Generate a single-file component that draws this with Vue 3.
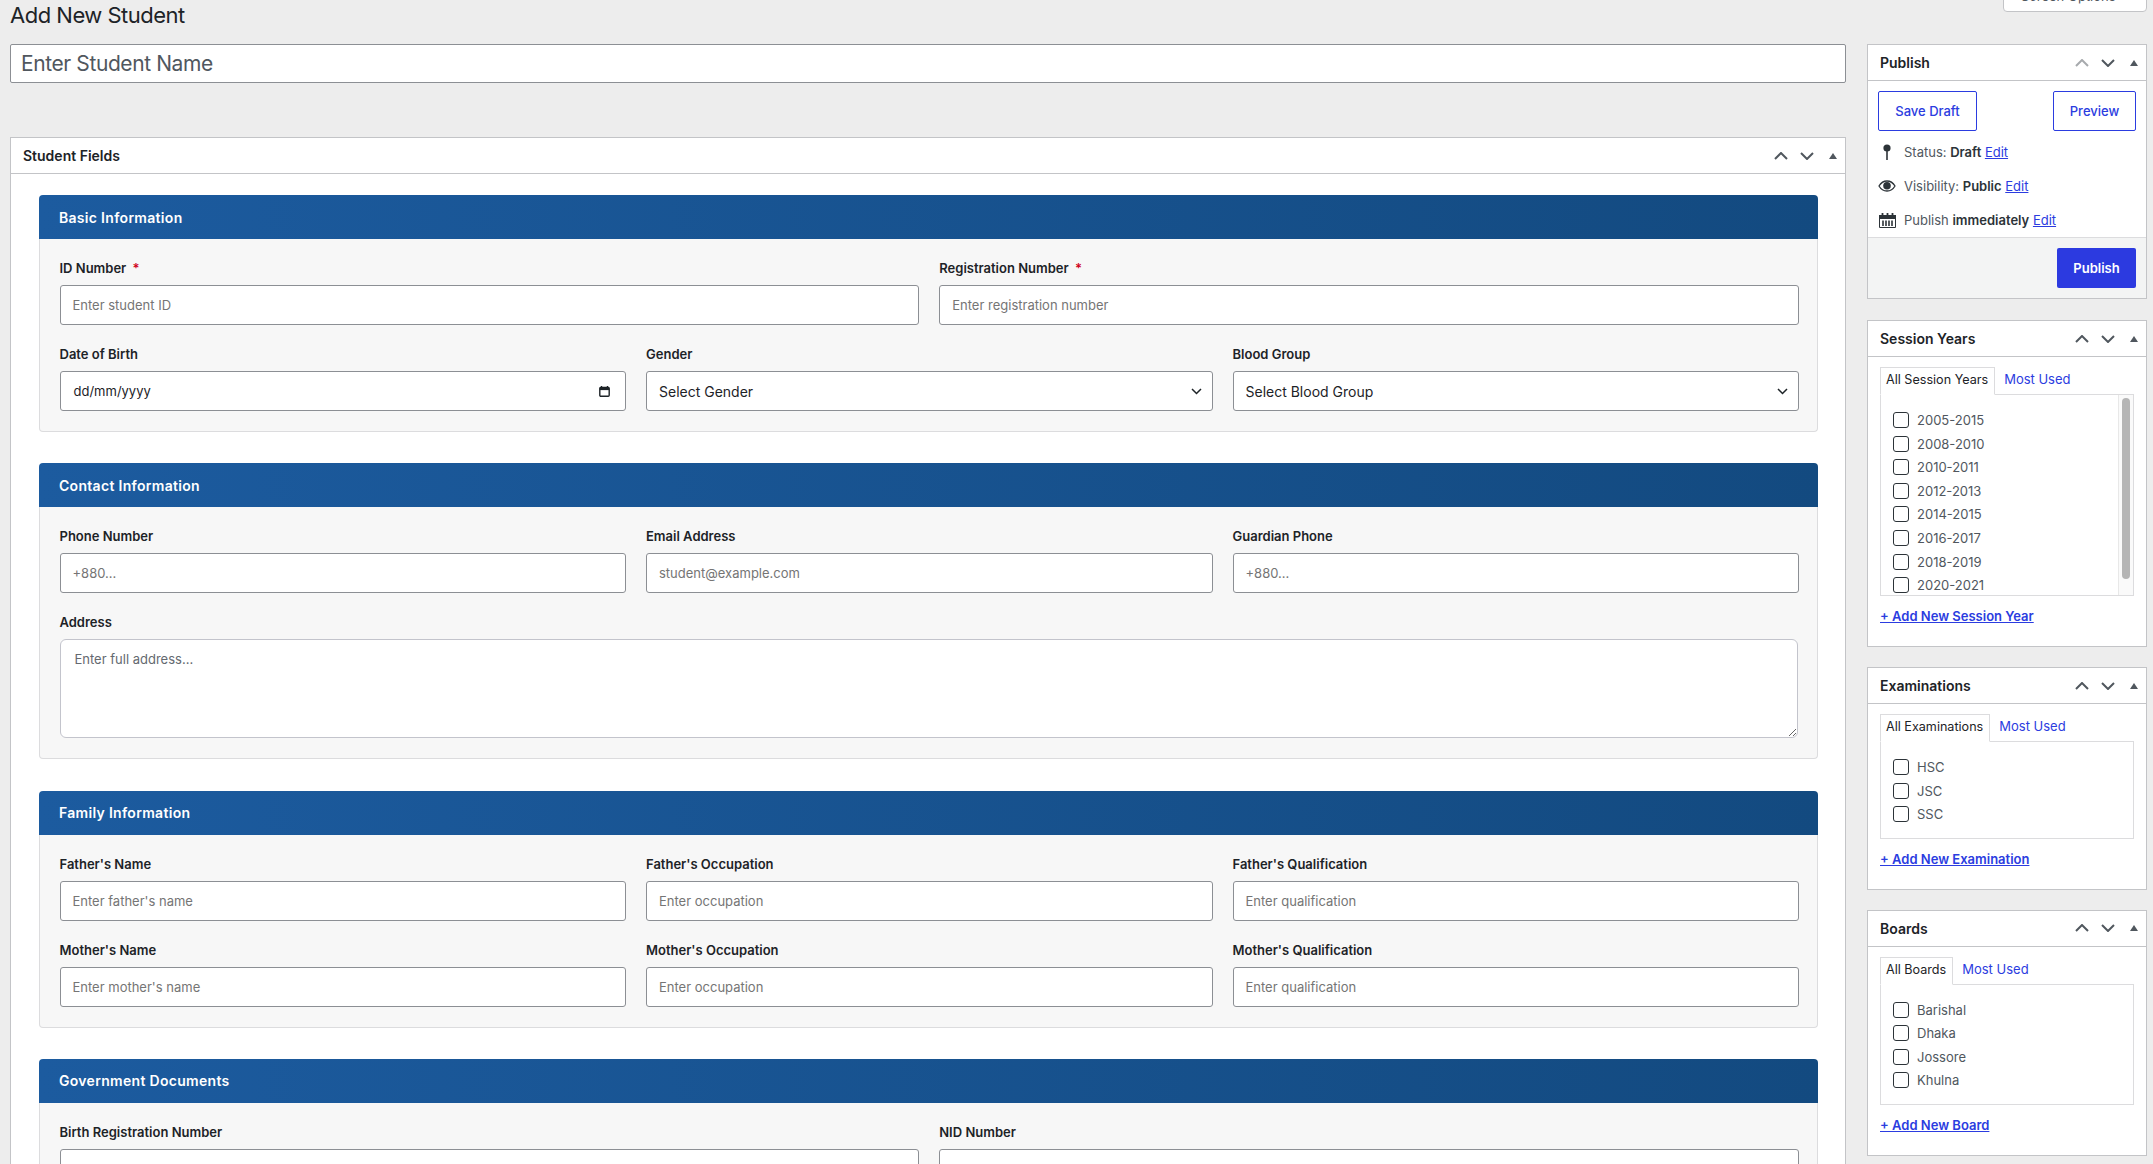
<script setup>
const basicRow = [
  { label: 'Date of Birth', type: 'date' },
  { label: 'Gender', type: 'select', value: 'Select Gender' },
  { label: 'Blood Group', type: 'select', value: 'Select Blood Group' }
]

const contactRow = [
  { label: 'Phone Number', placeholder: '+880...' },
  { label: 'Email Address', placeholder: 'student@example.com' },
  { label: 'Guardian Phone', placeholder: '+880...' }
]

const familyRows = [
  [
    { label: "Father's Name", placeholder: "Enter father's name" },
    { label: "Father's Occupation", placeholder: 'Enter occupation' },
    { label: "Father's Qualification", placeholder: 'Enter qualification' }
  ],
  [
    { label: "Mother's Name", placeholder: "Enter mother's name" },
    { label: "Mother's Occupation", placeholder: 'Enter occupation' },
    { label: "Mother's Qualification", placeholder: 'Enter qualification' }
  ]
]

const taxonomies = [
  {
    title: 'Session Years',
    tab: 'All Session Years',
    add: '+ Add New Session Year',
    scroll: true,
    items: ['2005-2015', '2008-2010', '2010-2011', '2012-2013', '2014-2015', '2016-2017', '2018-2019', '2020-2021']
  },
  {
    title: 'Examinations',
    tab: 'All Examinations',
    add: '+ Add New Examination',
    items: ['HSC', 'JSC', 'SSC']
  },
  {
    title: 'Boards',
    tab: 'All Boards',
    add: '+ Add New Board',
    items: ['Barishal', 'Dhaka', 'Jossore', 'Khulna']
  }
]
</script>

<template>
  <div class="page">
    <div class="page-top">
      <h1>Add New Student</h1>
      <div class="screen-options">Screen Options <span class="caret"></span></div>
    </div>

    <div class="columns">
      <main class="main-col">
        <input class="title-input" type="text" placeholder="Enter Student Name">

        <div class="postbox fields-box">
          <div class="postbox-head">
            <h2>Student Fields</h2>
            <div class="handles">
              <svg class="chev" viewBox="0 0 14 8"><path d="M1 7l6-6 6 6" /></svg>
              <svg class="chev" viewBox="0 0 14 8"><path d="M1 1l6 6 6-6" /></svg>
              <svg class="tri" viewBox="0 0 8 6"><path d="M4 0l4 6H0z" /></svg>
            </div>
          </div>

          <div class="fields-inner">
            <section class="section">
              <h3 class="section-head">Basic Information</h3>
              <div class="section-body">
                <div class="row two">
                  <div class="field">
                    <label>ID Number <span class="req">*</span></label>
                    <input class="input" type="text" placeholder="Enter student ID">
                  </div>
                  <div class="field">
                    <label>Registration Number <span class="req">*</span></label>
                    <input class="input" type="text" placeholder="Enter registration number">
                  </div>
                </div>
                <div class="row three">
                  <div v-for="f in basicRow" :key="f.label" class="field">
                    <label>{{ f.label }}</label>
                    <div v-if="f.type === 'date'" class="input date-input">
                      <span>dd/mm/yyyy</span>
                      <svg class="cal" viewBox="0 0 11 11">
                        <path d="M2.5 0v2M8.5 0v2" stroke="#1d2327" stroke-width="1.4" />
                        <rect x="0.8" y="1.5" width="9.4" height="8.8" rx="1" fill="none" stroke="#1d2327" stroke-width="1.4" />
                        <rect x="0.8" y="1.5" width="9.4" height="2.6" fill="#1d2327" />
                      </svg>
                    </div>
                    <div v-else class="select-wrap">
                      <select class="input select">
                        <option>{{ f.value }}</option>
                      </select>
                      <svg class="select-arrow" viewBox="0 0 11 7"><path d="M1 1l4.5 4.5L10 1" /></svg>
                    </div>
                  </div>
                </div>
              </div>
            </section>

            <section class="section">
              <h3 class="section-head">Contact Information</h3>
              <div class="section-body">
                <div class="row three">
                  <div v-for="f in contactRow" :key="f.label" class="field">
                    <label>{{ f.label }}</label>
                    <input class="input" type="text" :placeholder="f.placeholder">
                  </div>
                </div>
                <div class="row">
                  <div class="field">
                    <label>Address</label>
                    <textarea class="textarea" placeholder="Enter full address..."></textarea>
                  </div>
                </div>
              </div>
            </section>

            <section class="section">
              <h3 class="section-head">Family Information</h3>
              <div class="section-body">
                <div v-for="(r, i) in familyRows" :key="i" class="row three">
                  <div v-for="f in r" :key="f.label" class="field">
                    <label>{{ f.label }}</label>
                    <input class="input" type="text" :placeholder="f.placeholder">
                  </div>
                </div>
              </div>
            </section>

            <section class="section">
              <h3 class="section-head">Government Documents</h3>
              <div class="section-body">
                <div class="row two">
                  <div class="field">
                    <label>Birth Registration Number</label>
                    <input class="input" type="text">
                  </div>
                  <div class="field">
                    <label>NID Number</label>
                    <input class="input" type="text">
                  </div>
                </div>
              </div>
            </section>
          </div>
        </div>
      </main>

      <aside class="side-col">
        <div class="postbox publish-box">
          <div class="postbox-head">
            <h2>Publish</h2>
            <div class="handles">
              <svg class="chev faded" viewBox="0 0 14 8"><path d="M1 7l6-6 6 6" /></svg>
              <svg class="chev" viewBox="0 0 14 8"><path d="M1 1l6 6 6-6" /></svg>
              <svg class="tri" viewBox="0 0 8 6"><path d="M4 0l4 6H0z" /></svg>
            </div>
          </div>
          <div class="publish-actions">
            <button class="btn-outline save">Save Draft</button>
            <button class="btn-outline preview">Preview</button>
          </div>
          <div class="misc">
            <div class="misc-row">
              <span class="misc-icon">
                <svg viewBox="0 0 18 16" width="18" height="16">
                  <circle cx="9" cy="4" r="3.6" fill="#2c3338" />
                  <path d="M9 6v10" stroke="#2c3338" stroke-width="1.6" />
                </svg>
              </span>
              <span>Status: <b>Draft</b> <a>Edit</a></span>
            </div>
            <div class="misc-row">
              <span class="misc-icon">
                <svg viewBox="0 0 18 12" width="18" height="12">
                  <path d="M1 6c2-3.4 4.800-5 8-5s6 1.600 8 5c-2 3.400-4.800 5-8 5s-6-1.600-8-5z" fill="none" stroke="#2c3338" stroke-width="1.300" />
                  <circle cx="9" cy="5.700" r="3.800" fill="#2c3338" />
                </svg>
              </span>
              <span>Visibility: <b>Public</b> <a>Edit</a></span>
            </div>
            <div class="misc-row">
              <span class="misc-icon">
                <svg viewBox="0 0 17 15" width="17" height="15">
                  <path d="M0.500 2.500h16v12h-16z" fill="none" stroke="#2c3338" />
                  <path d="M0 2h17v4H0z" fill="#2c3338" />
                  <path d="M3.500 0v3M8.500 0v3M13.500 0v3" stroke="#2c3338" stroke-width="1.800" />
                  <path d="M4 7.500v5.500M7 7.500v5.500M10 7.500v5.500M13 7.500v5.500" stroke="#2c3338" stroke-width="1.600" />
                </svg>
              </span>
              <span>Publish <b>immediately</b> <a>Edit</a></span>
            </div>
          </div>
          <div class="publish-foot">
            <button class="btn-primary">Publish</button>
          </div>
        </div>

        <div v-for="t in taxonomies" :key="t.title" class="postbox">
          <div class="postbox-head">
            <h2>{{ t.title }}</h2>
            <div class="handles">
              <svg class="chev" viewBox="0 0 14 8"><path d="M1 7l6-6 6 6" /></svg>
              <svg class="chev" viewBox="0 0 14 8"><path d="M1 1l6 6 6-6" /></svg>
              <svg class="tri" viewBox="0 0 8 6"><path d="M4 0l4 6H0z" /></svg>
            </div>
          </div>
          <div class="tax-body">
            <div class="tabs">
              <span class="tab active">{{ t.tab }}</span>
              <a class="tab-link">Most Used</a>
            </div>
            <div class="tax-panel" :class="{ scrolling: t.scroll }">
              <ul>
                <li v-for="item in t.items" :key="item">
                  <input type="checkbox" class="check">
                  <span>{{ item }}</span>
                </li>
              </ul>
              <div v-if="t.scroll" class="track"><div class="thumb"></div></div>
            </div>
            <a class="add-link">{{ t.add }}</a>
          </div>
        </div>
      </aside>
    </div>
  </div>
</template>

<style>
html, body {
  margin: 0;
  height: 1164px;
  overflow: hidden;
  background: #ededed;
}
</style>

<style scoped>
.page {
  box-sizing: border-box;
  height: 1164px;
  overflow: hidden;
  padding: 0 6px 0 10px;
  font-family: Inter, "Liberation Sans", sans-serif;
  font-size: 13px;
  color: #1d2327;
  background: #ededed;
}

.page-top {
  display: flex;
  justify-content: space-between;
  align-items: flex-start;
  height: 44px;
}

h1 {
  margin: 0;
  font-size: 22px;
  font-weight: 400;
  line-height: 30px;
  letter-spacing: -0.5px;
}

.screen-options {
  box-sizing: border-box;
  width: 144px;
  height: 30px;
  margin: -18px 0 0;
  padding-left: 17px;
  line-height: 26px;
  color: #50575e;
  background: #fff;
  border: 1px solid #c3c4c7;
  border-radius: 0 0 4px 4px;
}

.caret {
  display: inline-block;
  margin-left: 6px;
  border: 4px solid transparent;
  border-top-color: #787c82;
  vertical-align: -2px;
}

.columns {
  display: grid;
  grid-template-columns: 1fr 280px;
  column-gap: 21px;
}

.title-input {
  display: block;
  box-sizing: border-box;
  width: 100%;
  height: 39px;
  padding: 0 10px;
  font: 400 21px Inter, "Liberation Sans", sans-serif;
  letter-spacing: -0.4px;
  background: #fff;
  border: 1px solid #8c8f94;
  border-radius: 2px;
  outline: none;
}

.title-input::placeholder {
  color: #50575e;
  opacity: 1;
}

.postbox {
  background: #fff;
  border: 1px solid #c3c4c7;
  margin-bottom: 20px;
}

.publish-box {
  margin-bottom: 21px;
}

.fields-box {
  margin-top: 54px;
  margin-bottom: 0;
}

.postbox-head {
  display: flex;
  justify-content: space-between;
  align-items: center;
  height: 35px;
  padding-left: 12px;
  border-bottom: 1px solid #c3c4c7;
}

.postbox-head h2 {
  margin: 0;
  font-size: 14px;
  font-weight: 600;
}

.handles {
  display: flex;
  align-items: center;
}

.chev {
  width: 14px;
  height: 8px;
  margin: 0 6px;
  fill: none;
  stroke: #50575e;
  stroke-width: 2;
}

.chev.faded {
  stroke: #a7aaad;
}

.tri {
  width: 8px;
  height: 6px;
  margin: 0 8px 0 9px;
  fill: #50575e;
}

.fields-inner {
  padding: 21px 27px 0 28px;
}

.section {
  margin-bottom: 31.300px;
}

.section-head {
  display: flex;
  align-items: center;
  box-sizing: border-box;
  height: 44px;
  margin: 0;
  padding-left: 20px;
  font-size: 14px;
  font-weight: 600;
  letter-spacing: 0.300px;
  color: #fff;
  background: linear-gradient(90deg, #1c5b9f, #134a80);
  border-radius: 4px 4px 0 0;
}

.section-body {
  display: flex;
  flex-direction: column;
  gap: 20px;
  padding: 20px 18px 20px 19.500px;
  background: #f7f7f7;
  border: 1px solid #dcdcde;
  border-top: 0;
  border-radius: 0 0 4px 4px;
}

.row {
  display: grid;
  gap: 20px;
}

.row.two {
  grid-template-columns: 1fr 1fr;
}

.row.three {
  grid-template-columns: 1fr 1fr 1fr;
}

.field {
  display: flex;
  flex-direction: column;
  min-width: 0;
}

label {
  height: 18px;
  margin-bottom: 8px;
  font-size: 13px;
  font-weight: 600;
  line-height: 18px;
}

.req {
  margin-left: 3px;
  color: #d0021b;
}

.input {
  box-sizing: border-box;
  width: 100%;
  height: 40px;
  padding: 0 12px;
  font: 400 13px Inter, "Liberation Sans", sans-serif;
  color: #1d2327;
  background: #fff;
  border: 1px solid #8c8f94;
  border-radius: 3px;
  outline: none;
}

.input::placeholder {
  color: #757575;
  opacity: 1;
}

.date-input {
  display: flex;
  align-items: center;
  justify-content: space-between;
  padding: 0 15px 0 13px;
}

.cal {
  width: 11px;
  height: 11px;
}

.select-wrap {
  position: relative;
}

.select {
  display: block;
  appearance: none;
  font-size: 14px;
}

.select-arrow {
  position: absolute;
  top: 17px;
  right: 11px;
  width: 11px;
  height: 7px;
  fill: none;
  stroke: #1d2327;
  stroke-width: 1.500;
}

.textarea {
  display: block;
  box-sizing: border-box;
  width: calc(100% - 1.500px);
  height: 99px;
  padding: 11px 14px;
  font: 400 13px Inter, "Liberation Sans", sans-serif;
  background: #fff;
  border: 1px solid #c3c4cc;
  border-radius: 6px;
  outline: none;
}

.textarea::placeholder {
  color: #646970;
  opacity: 1;
}

.publish-actions {
  display: flex;
  justify-content: space-between;
  padding: 10px 10px 4px;
}

button {
  font-family: inherit;
  cursor: pointer;
}

.btn-outline {
  box-sizing: border-box;
  height: 40px;
  padding: 0;
  font-size: 13px;
  font-weight: 500;
  color: #2b3ce0;
  background: #fff;
  border: 1px solid #2b3ce0;
  border-radius: 2px;
}

.save {
  width: 99px;
}

.preview {
  width: 83px;
}

.misc-row {
  display: flex;
  align-items: center;
  height: 34px;
  padding-left: 10px;
  color: #50575e;
}

.misc-icon {
  display: flex;
  justify-content: center;
  flex: 0 0 18px;
  margin-right: 8px;
}

.misc b {
  font-weight: 600;
  color: #2c3338;
}

a {
  color: #2b3ce0;
  text-decoration: underline;
}

.publish-foot {
  display: flex;
  justify-content: flex-end;
  padding: 10px;
  background: #f3f4f4;
  border-top: 1px solid #dcdcde;
}

.btn-primary {
  width: 79px;
  height: 40px;
  padding: 0;
  font-size: 13px;
  font-weight: 600;
  color: #fff;
  background: #2c3ae0;
  border: 0;
  border-radius: 2px;
}

.tax-body {
  padding: 10px 12px 0;
}

.tabs {
  display: flex;
  align-items: flex-end;
  height: 28px;
  margin-bottom: -1px;
  position: relative;
  font-size: 12.600px;
}

.tab {
  box-sizing: border-box;
  height: 28px;
  padding: 0 6px 0 5px;
  line-height: 24px;
  background: #fff;
  border: 1px solid #dcdcde;
  border-bottom-color: #fff;
}

.tab-link {
  height: 28px;
  margin-left: 9px;
  font-size: 13px;
  line-height: 24px;
  text-decoration: none;
}

.tax-panel {
  display: flex;
  justify-content: space-between;
  border: 1px solid #dcdcde;
  background: #fff;
}

.tax-panel.scrolling {
  height: 202px;
  box-sizing: border-box;
  overflow: hidden;
}

.tax-panel ul {
  margin: 0;
  padding: 13.300px 0 11.500px 12px;
  list-style: none;
}

.tax-panel li {
  display: flex;
  align-items: center;
  height: 23.600px;
  color: #50575e;
}

.check {
  appearance: none;
  box-sizing: border-box;
  width: 16px;
  height: 16px;
  margin: 0 8px 0 0;
  background: #fff;
  border: 1px solid #2c3338;
  border-radius: 3px;
}

.track {
  box-sizing: border-box;
  flex: 0 0 15px;
  padding: 3px 3px 0 3px;
  background: #fafafa;
  border-left: 1px solid #e8e8e8;
}

.thumb {
  height: 181px;
  background: #b5b5b5;
  border-radius: 4px;
}

.add-link {
  display: block;
  height: 16px;
  margin-top: 12px;
  padding-bottom: 22px;
  line-height: 16px;
  font-weight: 600;
}
</style>
